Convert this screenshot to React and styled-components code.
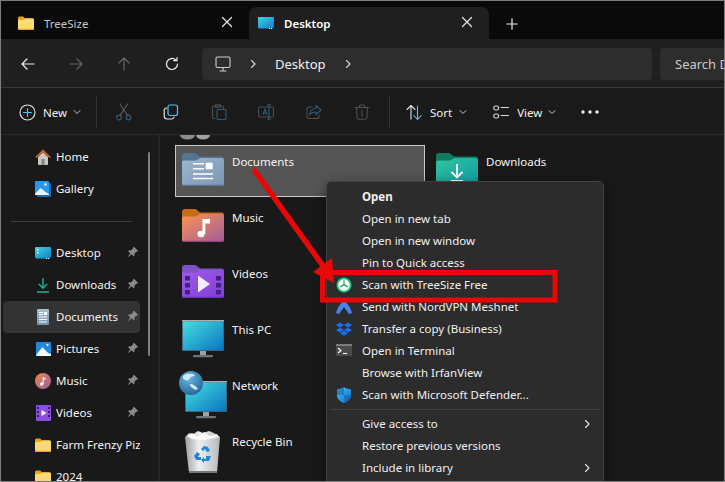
import React from "react";
import styled, { createGlobalStyle } from "styled-components";

const Global = createGlobalStyle`
  html, body { margin: 0; padding: 0; background: #191919; }
  * { box-sizing: border-box; }
`;

const Win = styled.div`
  position: relative; width: 725px; height: 482px; overflow: hidden;
  border: 1px solid #7d7d7d; display: flex; flex-direction: column;
  background: #191919; color: #fff;
  font-family: "Noto Sans", "Open Sans", sans-serif; font-size: 11.5px;
`;
const TabBar = styled.div`
  height: 38px; flex: none; background: #0a0a0a; display: flex; align-items: flex-end;
`;
const Tab = styled.div`
  height: 32px; width: ${p => p.$w}px; display: flex; align-items: center; position: relative;
  padding: 0 0 0 ${p => p.$pad}px; gap: ${p => p.$gap}px;
  background: ${p => (p.$active ? "#1f1f1f" : "transparent")};
  border-radius: 7px 7px 0 0; color: ${p => (p.$active ? "#fff" : "#c4c4c4")};
  font-weight: ${p => (p.$active ? 600 : 400)}; flex: none;
`;
const TabClose = styled.span`
  margin-left: auto; margin-right: 16px; margin-bottom: 3px; display: flex;
`;
const PlusBtn = styled.span`
  margin-left: 17px; display: flex; padding-bottom: 9px;
`;
const NavBar = styled.div`
  height: 49px; flex: none; background: #1f1f1f; border-bottom: 1px solid #3a3a3a;
  display: flex; align-items: center; padding: 1px 0 0 3px;
`;
const NavBtn = styled.span`
  width: 48px; display: flex; justify-content: center; flex: none;
`;
const AddressBar = styled.div`
  width: 450px; height: 32px; flex: none; margin-left: 6px; background: #2d2d2d; border-radius: 4px;
  display: flex; align-items: center; padding-left: 13px; font-size: 13px; color: #f2f2f2;
`;
const Crumb = styled.span`
  margin: 0 ${p => p.$r}px 0 ${p => p.$l}px; display: flex;
`;
const SearchBox = styled.div`
  width: 80px; height: 32px; flex: none; margin-left: 8px; background: #2d2d2d; border-radius: 4px 0 0 4px;
  display: flex; align-items: center; padding-left: 15px; font-size: 13px; color: #c9c9c9;
  white-space: nowrap; overflow: hidden;
`;
const Toolbar = styled.div`
  height: 47px; flex: none; background: #1a1a1a; border-bottom: 1px solid #2b2b2b;
  display: flex; align-items: center; padding: 2px 0 0 18px;
`;
const ToolText = styled.span`
  margin-left: ${p => p.$l}px; color: #f2f2f2; display: inline-block;
`;
const ToolChevron = styled.span`
  margin-left: ${p => p.$l}px; display: flex;
`;
const ToolSep = styled.span`
  width: 1px; height: 32px; background: #333; flex: none; margin-left: ${p => p.$l}px;
`;
const ToolIcon = styled.span`
  margin-left: ${p => p.$l}px; display: flex; flex: none;
`;
const Body = styled.div`
  flex: 1; min-height: 0; display: flex; overflow: hidden;
`;
const Sidebar = styled.div`
  width: 157px; flex: none; padding: 6px 0 0 2px; position: relative; overflow: hidden;
`;
const SideThumb = styled.span`
  position: absolute; left: 147px; top: 17px; width: 2px; height: 204px; background: #7f7f7f; border-radius: 1px;
`;
const SideRow = styled.div`
  width: 137px; height: 32px; display: flex; align-items: center; padding-left: 32px; position: relative;
  border-radius: 4px; background: ${p => (p.$sel ? "#333333" : "transparent")}; white-space: nowrap; overflow: hidden;
  color: #f4f4f4;
`;
const SideGlyph = styled.span`
  width: 16px; display: flex; justify-content: center; flex: none;
`;
const SideLabel = styled.span`
  margin-left: 5px; padding-bottom: 2px;
`;
const SidePin = styled.span`
  position: absolute; left: 124px; top: 9px; display: flex;
`;
const SideDivider = styled.div`
  height: 32px; width: 137px; display: flex; align-items: center; padding-left: 8px;
  &::after { content: ""; display: block; width: 121px; height: 1px; background: #3d3d3d; }
`;
const Split = styled.div`
  width: 2px; flex: none; background: #262626; margin-right: 15px;
`;
const Content = styled.div`
  flex: 1; min-width: 0; display: flex; flex-direction: column; overflow: hidden;
`;
const PeekStrip = styled.div`
  height: 10px; flex: none; padding-left: 5px; overflow: hidden; display: flex; align-items: flex-start;
`;
const Columns = styled.div`
  display: flex; gap: 4px;
`;
const Column = styled.div`
  width: 250px; flex: none; display: flex; flex-direction: column; gap: 4px;
`;
const Tile = styled.div`
  height: 52px; display: flex; align-items: flex-start; position: relative;
  border: 1px solid ${p => (p.$sel ? "#c8c8c8" : "transparent")};
  background: ${p => (p.$sel ? "#555555" : "transparent")};
  color: #f4f4f4;
`;
const TileIcon = styled.span`
  width: 56px; height: 50px; flex: none; display: block;
`;
const TileLabel = styled.span`
  line-height: 16px; padding-top: 8px;
`;
const Menu = styled.div`
  position: absolute; left: 325px; top: 180px; width: 278px; height: 320px;
  background: #2c2c2c; border: 1px solid #414141; border-radius: 5px; padding: 4px 0;
  box-shadow: 0 4px 14px rgba(0,0,0,.45);
`;
const MenuItem = styled.div`
  height: 22px; display: flex; align-items: center; position: relative; padding: 0 0 2px 35px;
  color: #f0f0f0; font-weight: ${p => (p.$bold ? 700 : 400)};
  white-space: nowrap;
`;
const MenuGlyph = styled.span`
  position: absolute; left: 9px; top: 3px; width: 16px; height: 16px; display: block;
`;
const MenuArrow = styled.span`
  position: absolute; left: 255px; top: 6px; display: flex;
`;
const MenuSep = styled.div`
  height: 7px; display: flex; align-items: center; padding: 0 4px 1px;
  &::after { content: ""; flex: 1; height: 1px; background: #434343; }
`;
const Annotation = styled.svg`
  position: absolute; left: -1px; top: -1px; width: 725px; height: 482px; pointer-events: none;
`;

const Line = ({ c = "#fff", w = 1.2, size = 16, children, vb = "0 0 16 16" }) => (
  <svg width={size} height={size} viewBox={vb} fill="none" stroke={c} strokeWidth={w} strokeLinecap="round" strokeLinejoin="round">{children}</svg>
);
const X = () => <Line size={12} vb="0 0 12 12" c="#e8e8e8"><path d="M1.5 1.5l9 9M10.5 1.5l-9 9" /></Line>;
const Chevron = ({ c = "#dcdcdc" }) => <Line size={10} vb="0 0 10 10" c={c} w={1.1}><path d="M3.5 1.5L7 5 3.5 8.5" /></Line>;
const Down = () => <Line size={8} vb="0 0 8 8" c="#c6c6c6" w={1}><path d="M1 2.5L4 5.5 7 2.5" /></Line>;
const Pin = () => (
  <svg width="12" height="12" viewBox="0 0 12 12"><path d="M7 .8l4.2 4.2-1 .7-.7-.2-2 2 .1 1.9-.9.8-2-2L1.2 11 1 10.8l2.2-3.6-2-2 .8-.9 1.9.1 2-2-.2-.7z" fill="#8b8b8b" /></svg>
);
const SmallFolder = () => (
  <svg width="16" height="14" viewBox="0 0 16 14"><path d="M0 2a1.5 1.5 0 011.5-1.5h3.6L7 2.2h7.5A1.5 1.5 0 0116 3.7V4H0z" fill="#e8a317" /><path d="M0 4l6-.3L7.5 2.5h7A1.5 1.5 0 0116 4v8.5A1.5 1.5 0 0114.5 14h-13A1.5 1.5 0 010 12.5z" fill="#fcd977" /><path d="M0 12.5A1.5 1.5 0 001.5 14h13a1.5 1.5 0 001.5-1.5V12.700H0z" fill="#e8a81f" /></svg>
);
const DesktopSmall = ({ grad, dots }) => (
  <svg width="16" height="14" viewBox="0 0 16 14">
    <defs><linearGradient id={grad} x1="0" y1="0" x2="1" y2="1"><stop offset="0" stopColor="#3fd3e2" /><stop offset="1" stopColor="#0f7fc9" /></linearGradient></defs>
    <rect x="0" y="1" width="16" height="11" rx="1" fill={`url(#${grad})`} />
    <rect x="1" y="12" width="14" height="1" fill="#1b5c86" />
    <rect x="11" y="12" width="1" height="1" fill="#dff" /><rect x="13" y="12" width="1" height="1" fill="#dff" />
    {dots && <path d="M2 3h1.500v1.500H2zM2 6h1.500v1.500H2z" fill="#fff" />}
  </svg>
);
const HomeIcon = () => (
  <svg width="16" height="16" viewBox="0 0 16 16"><path d="M3 8l5-5 5 5v7a1 1 0 01-1 1H4a1 1 0 01-1-1z" fill="#c9c6c2" /><rect x="6.3" y="10" width="3.4" height="6" fill="#8a8784" /><path d="M.3 8L8 .6 15.7 8l-1 1L8 2.8 1.3 9z" fill="#d96b17" /></svg>
);
const GalleryIcon = () => (
  <svg width="16" height="16" viewBox="0 0 16 16"><rect x="2" y="2" width="14" height="14" rx="1" fill="#1a69b8" /><rect x="0" y="0" width="14" height="14" rx="1" fill="#2b97ea" /><path d="M0 13l5.5-6 5 4 3.5 2v1H0z" fill="#eaf5fd" /><circle cx="10.5" cy="3.5" r="1.3" fill="#fff" /></svg>
);
const DownArrow = ({ c = "#1fb18f" }) => (
  <svg width="16" height="16" viewBox="0 0 16 16" fill="none" stroke={c} strokeWidth="1.4"><path d="M8 1v10M3.8 7L8 11.2 12.2 7" /><path d="M2 15h12" strokeWidth="1.5" /></svg>
);
const DocSmall = () => (
  <svg width="14" height="16" viewBox="0 0 14 16"><defs><linearGradient id="ds" x1="0" y1="0" x2="0" y2="1"><stop offset="0" stopColor="#a9c0d6" /><stop offset="1" stopColor="#7390ad" /></linearGradient></defs><rect x="1" y="0" width="12" height="16" rx="1" fill="url(#ds)" /><path d="M3 3h4v1H3zM3 5h4v1H3zM3 7.5h8v1H3zM3 10h8v1H3zM3 12.500h8v1H3zM8 3h3v3H8z" fill="#fff" /></svg>
);
const PicturesSmall = () => (
  <svg width="15" height="14" viewBox="0 0 15 14"><rect width="15" height="14" rx="1" fill="#1e88dc" /><path d="M0 13L6.5 5 11 10l2 1.5 2 .5v1a1 1 0 01-1 1H1z" fill="#f2f9fe" /><circle cx="11.5" cy="2.8" r="1.1" fill="#fff" /></svg>
);
const MusicSmall = () => (
  <svg width="16" height="16" viewBox="0 0 16 16"><defs><linearGradient id="ms" x1="0" y1="0" x2="1" y2="1"><stop offset="0" stopColor="#f2884f" /><stop offset="1" stopColor="#9a5c9e" /></linearGradient></defs><circle cx="8" cy="8" r="8" fill="url(#ms)" /><circle cx="6.7" cy="11" r="1.8" fill="#fff" /><path d="M7.6 11V4.3l3 1v1.5l-2-.6V11z" fill="#fff" /></svg>
);
const VideoSmall = () => (
  <svg width="15" height="16" viewBox="0 0 15 16"><rect width="15" height="16" rx="1" fill="#8a4ee0" /><path d="M1 2h2v2H1zM1 6h2v2H1zM1 10h2v2H1zM12 2h2v2h-2zM12 6h2v2h-2zM12 10h2v2h-2z" fill="#3a1d73" /><path d="M5.5 5L10.5 8l-5 3z" fill="#fff" /></svg>
);

const BigFolder = ({ id, back, from, to, edge, children }) => (
  <g transform="translate(6,7)">
    <defs><linearGradient id={id} x1="0" y1="0" x2="1" y2="1"><stop offset="0" stopColor={from} /><stop offset="1" stopColor={to} /></linearGradient></defs>
    <path d="M0 3a3 3 0 013-3h10.5L18 3.5h21.5a2.5 2.5 0 012.5 2.5V10H0z" fill={back} />
    <path d="M0 9a1.5 1.5 0 011.5-1.5H14L18.5 5H39.5A2.5 2.5 0 0142 7.5V30.5A2.5 2.5 0 0139.5 33H2.5A2.5 2.5 0 010 30.5z" fill={`url(#${id})`} />
    <path d="M0 31.5A1.5 1.5 0 001.5 33h39a1.5 1.5 0 001.5-1.5V31.800H0z" fill={edge} />
    {children}
  </g>
);
const TileSvg = ({ children }) => (
  <TileIcon><svg width="56" height="50" viewBox="0 0 56 50" style={{ overflow: "visible" }}>{children}</svg></TileIcon>
);
const DocumentsBig = () => (
  <TileSvg>
    <BigFolder id="f1" back="#54758f" from="#9db6cf" to="#7b96b3" edge="#5b7892">
      <path d="M11 10h11v1.500H11zM11 15h11v1.500H11zM11 20.300h20v1.500H11zM11 24.700h20v1.500H11zM23.700 9.700h7v6.600h-7z" fill="#fff" />
    </BigFolder>
  </TileSvg>
);
const MusicBig = () => (
  <TileSvg>
    <BigFolder id="f2" back="#c96a16" from="#fb9450" to="#a35b9b" edge="#8a4a80">
      <ellipse cx="19" cy="25" rx="3.5" ry="3.2" fill="#fff" />
      <path d="M20.5 25V10h7.5v4.5h-4.700V25z" fill="#fff" />
    </BigFolder>
  </TileSvg>
);
const VideosBig = () => (
  <TileSvg>
    <BigFolder id="f3" back="#7c52c6" from="#a05ce8" to="#7f3ed6" edge="#6c33b5">
      <path d="M3 11h5v4.5H3zM3 18h5v4.5H3zM3 25h5v4.5H3zM34 11h5v4.5h-5zM34 18h5v4.5h-5zM34 25h5v4.5h-5z" fill="#3f2281" />
      <path d="M16 10.5L28 19 16 27.500z" fill="#f3edfc" />
    </BigFolder>
  </TileSvg>
);
const DownloadsBig = () => (
  <TileSvg>
    <BigFolder id="f4" back="#0e7a5e" from="#30c49c" to="#0f9ca6" edge="#0d7a80">
      <path d="M21 11v13M15.5 19L21 24.500 26.500 19M15 28h12" fill="none" stroke="#fff" strokeWidth="1.8" />
    </BigFolder>
  </TileSvg>
);
const Monitor = ({ id, x, y }) => (
  <g transform={`translate(${x},${y})`}>
    <defs><linearGradient id={id} x1="0" y1="0" x2="1" y2="1"><stop offset="0" stopColor="#45e0e0" /><stop offset="1" stopColor="#0a74c0" /></linearGradient></defs>
    <rect x="0" y="0" width="42" height="31" fill="#4d5a63" rx="1" />
    <rect x="0.8" y="1.4" width="40.4" height="28.8" fill={`url(#${id})`} />
    <rect x="0" y="0" width="42" height="1.3" fill="#a7b0b5" />
    <rect x="18" y="31" width="6" height="5" fill="#9aa3a8" />
    <rect x="11" y="35" width="20" height="2.2" rx="1" fill="#6c757b" />
  </g>
);
const ThisPC = () => <TileSvg><Monitor id="m1" x={6} y={6} /></TileSvg>;
const NetworkBig = () => (
  <TileSvg>
    <Monitor id="m2" x={9} y={11} />
    <defs><radialGradient id="gl" cx=".4" cy=".3" r=".8"><stop offset="0" stopColor="#6db8e0" /><stop offset="1" stopColor="#1c5e94" /></radialGradient></defs>
    <circle cx="15" cy="13" r="12" fill="url(#gl)" />
    <path d="M8 5c3-1 7-2 11 0-1 2-4 1-5 3s-3 3-5 2-3-3-1-5zM14 14c3 0 6 2 8 5-2 1-3 1-4 0s-4-2-4-5z" fill="#d4e9f4" />
  </TileSvg>
);
const RecycleBig = () => (
  <TileSvg>
    <g transform="translate(9,4)">
      <defs><linearGradient id="bin" x1="0" y1="0" x2="1" y2="0"><stop offset="0" stopColor="#9ca0a3" /><stop offset=".4" stopColor="#eef0f1" /><stop offset="1" stopColor="#b5b8ba" /></linearGradient></defs>
      <path d="M0 7l4-4 4 1 5-3 5 2 6-2 5 2 6 4-3 36H4z" fill="url(#bin)" />
      <path d="M2 6l5-3 6 4 6-5 6 4 7-2 2 3-15 3-12-1z" fill="#fafafa" />
      <path d="M16 19l3-3 4 1 2 4-3 1-2-3-2 2zM9 26l3-4 3 2-2 3h3v3h-5zM21 26h5l-2 5h-5v2l-3-3 3-3v2h2z" fill="#1e86de" />
      <rect x="4" y="41" width="28" height="2" fill="#777" />
    </g>
  </TileSvg>
);

const sideRows = [
  ["Home", <HomeIcon />], ["Gallery", <GalleryIcon />], null,
  ["Desktop", <DesktopSmall grad="d2" dots />, true],
  ["Downloads", <DownArrow />, true],
  ["Documents", <DocSmall />, true, true],
  ["Pictures", <PicturesSmall />, true],
  ["Music", <MusicSmall />, true],
  ["Videos", <VideoSmall />, true],
  ["Farm Frenzy Pizza Party", <SmallFolder />],
  ["2024", <SmallFolder />],
];

const TreeSizeGlyph = () => (
  <svg width="16" height="16" viewBox="0 0 16 16"><circle cx="8" cy="8" r="7.5" fill="#27c77a" /><circle cx="8" cy="8" r="5.7" fill="#fff" /><path d="M7.400 3.3h1.200v4l3.600 2.2-.6 1L8 8.5l-3.600 2-.6-1 3.600-2.200z" fill="#1d9e5f" /></svg>
);
const NordGlyph = () => (
  <svg width="16" height="16" viewBox="0 0 16 16"><path d="M0 14C1 9 4 5 8 1c4 4 7 8 8 13l-3 1-5-7-5 7z" fill="#4880ee" /></svg>
);
const DropboxGlyph = () => (
  <svg width="16" height="16" viewBox="0 0 16 16"><path d="M4 1.5L8 4 4 6.5 0 4zM12 1.5L16 4l-4 2.5L8 4zM4 6.5L8 9l-4 2.5L0 9zM12 6.500L16 9l-4 2.500L8 9zM4 12.300l4-2.500 4 2.500-4 2.500z" fill="#1a6ff0" /></svg>
);
const TerminalGlyph = () => (
  <svg width="16" height="16" viewBox="0 0 16 16"><rect y="1" width="16" height="12" fill="#4a4a4a" /><rect y="1" width="16" height="2" fill="#7c7c7c" /><path d="M2 5l3 2.5L2 10" fill="none" stroke="#fff" strokeWidth="1.1" /><path d="M7 10.5h4" stroke="#fff" strokeWidth="1.1" /></svg>
);
const ShieldGlyph = () => (
  <svg width="16" height="16" viewBox="0 0 16 16"><defs><linearGradient id="sh" x1="0" y1="0" x2="1" y2="1"><stop offset="0" stopColor="#4cc3f0" /><stop offset="1" stopColor="#0b6bc4" /></linearGradient></defs><path d="M8 0c2 1.5 4 2 7 2.2V8c0 4-3 6.5-7 8-4-1.500-7-4-7-8V2.200C4 2 6 1.500 8 0z" fill="url(#sh)" /><path d="M8 8h7c0 4-3 6.5-7 8zM1 8h7V0C6 1.500 4 2 1 2.200z" fill="#0d5fae" opacity=".55" /></svg>
);

const menuTop = [
  ["Open", null, true], ["Open in new tab"], ["Open in new window"], ["Pin to Quick access"],
  ["Scan with TreeSize Free", <TreeSizeGlyph />], ["Send with NordVPN Meshnet", <NordGlyph />],
  ["Transfer a copy (Business)", <DropboxGlyph />], ["Open in Terminal", <TerminalGlyph />],
  ["Browse with IrfanView"], ["Scan with Microsoft Defender...", <ShieldGlyph />],
];
const menuBottom = [["Give access to", true], ["Restore previous versions", false], ["Include in library", true]];
const dim = "#2f5a78";

export default function App() {
  return (
    <Win>
      <Global />
      <TabBar>
        <Tab $w={248} $pad={17} $gap={10}><SmallFolder /><span>TreeSize</span><TabClose><X /></TabClose></Tab>
        <Tab $w={240} $pad={9} $gap={10} $active><DesktopSmall grad="d1" /><span>Desktop</span><TabClose><X /></TabClose></Tab>
        <PlusBtn><Line size={12} vb="0 0 12 12" c="#eee"><path d="M6 .8v10.400M.8 6h10.400" /></Line></PlusBtn>
      </TabBar>
      <NavBar>
        <NavBtn><Line c="#efefef"><path d="M14 8H2M7 3L2 8l5 5" /></Line></NavBtn>
        <NavBtn><Line c="#666"><path d="M2 8h12M9 3l5 5-5 5" /></Line></NavBtn>
        <NavBtn><Line c="#666"><path d="M8 14V2M3 7l5-5 5 5" /></Line></NavBtn>
        <NavBtn><Line c="#efefef"><path d="M13.5 8a5.500 5.500 0 11-1.800-4.100M13 1.500v3.200H9.800" /></Line></NavBtn>
        <AddressBar>
          <Line size={16} c="#cfcfcf" w={1.1}><rect x="1" y="1" width="14" height="10.500" rx="1.500" /><path d="M8 11.500V15M5 15h6" /></Line>
          <Crumb $l={17} $r={17}><Chevron /></Crumb>
          <span>Desktop</span>
          <Crumb $l={17} $r={0}><Chevron /></Crumb>
        </AddressBar>
        <SearchBox>Search Desktop</SearchBox>
      </NavBar>
      <Toolbar>
        <Line size={17} vb="0 0 17 17" c="#e6e6e6" w={1.1}><circle cx="8.500" cy="8.500" r="7.500" /><path d="M8.500 4.500v8M4.500 8.500h8" stroke="#4cc2ff" /></Line>
        <ToolText $l={7}>New</ToolText>
        <ToolChevron $l={6}><Down /></ToolChevron>
        <ToolSep $l={15} />
        <ToolIcon $l={18}><Line size={18} vb="0 0 18 18" c={dim} w={1.2}><circle cx="4" cy="14.500" r="2.300" /><circle cx="13.500" cy="14.500" r="2.300" /><path d="M5 12.500L12.500 1M12.500 12.500L5 1" stroke="#5c5c5c" /></Line></ToolIcon>
        <ToolIcon $l={30}><Line size={16} c="#e0e0e0" w={1.2}><rect x="5" y="1" width="9.500" height="10.500" rx="2" stroke="#4cc2ff" /><path d="M3.800 4A2.500 2.500 0 001.200 6.500v5.500A3 3 0 004.200 15h4.500a2.500 2.500 0 002.400-2" /></Line></ToolIcon>
        <ToolIcon $l={32}><Line size={16} c="#4f4f4f" w={1.1}><path d="M4 14.500H2.500a1 1 0 01-1-1V3a1 1 0 011-1h9a1 1 0 011 1v2" /><path d="M4.500 .8h5v2.500h-5z" /><rect x="6" y="5.500" width="9" height="10" rx="1" stroke={dim} /></Line></ToolIcon>
        <ToolIcon $l={31}><Line size={16} c="#4f4f4f" w={1.1}><rect x="0.600" y="3" width="14.800" height="10" rx="1.500" /><path d="M5 10.500l2-5.500 2 5.500M5.700 9h2.600" stroke={dim} /><path d="M11 .8v14.400M9.500 .8h3M9.500 15.200h3" stroke={dim} /></Line></ToolIcon>
        <ToolIcon $l={32}><Line size={16} c="#4f4f4f" w={1.1}><path d="M6 3H3a2 2 0 00-2 2v7.500a2 2 0 002 2h8a2 2 0 002-2V11" /><path d="M10 1.500l5 4.500-5 4.500V8c-3 0-5 .5-6.500 3C3.500 7.500 6 4.500 10 4.300z" stroke={dim} /></Line></ToolIcon>
        <ToolIcon $l={32}><Line size={16} c="#4f4f4f" w={1.1}><path d="M1 3.500h14M5.500 3.500V2a1 1 0 011-1h3a1 1 0 011 1v1.500M2.500 3.500l.7 10.500a1.500 1.500 0 001.500 1.300h6.600a1.500 1.500 0 001.500-1.300l.7-10.500M8 6.500v6" /></Line></ToolIcon>
        <ToolSep $l={19} />
        <ToolIcon $l={16}><Line size={17} vb="0 0 17 17" c="#e0e0e0" w={1.1}><path d="M5 15V1.500M1 5.500l4-4 4 4" /><path d="M11.500 2v13.500M7.800 11.500l3.700 4 3.700-4" stroke="#4cc2ff" /></Line></ToolIcon>
        <ToolText $l={7}>Sort</ToolText>
        <ToolChevron $l={7}><Down /></ToolChevron>
        <ToolIcon $l={26}><Line size={16} c="#dcdcdc" w={1.1}><rect x="0.800" y="2" width="4.800" height="4" rx="1.800" /><rect x="0.800" y="10" width="4.800" height="4" rx="1.800" /><path d="M8 3.500h7.500M8 11.500h7.500" /></Line></ToolIcon>
        <ToolText $l={8}>View</ToolText>
        <ToolChevron $l={6}><Down /></ToolChevron>
        <ToolIcon $l={25}><svg width="18" height="4" viewBox="0 0 18 4"><circle cx="2" cy="2" r="1.700" fill="#eee" /><circle cx="9" cy="2" r="1.700" fill="#eee" /><circle cx="16" cy="2" r="1.700" fill="#eee" /></svg></ToolIcon>
      </Toolbar>
      <Body>
        <Sidebar>
          <SideThumb />
          {sideRows.map((r, i) =>
            r ? (
              <SideRow key={i} $sel={r[3]}>
                <SideGlyph>{r[1]}</SideGlyph>
                <SideLabel>{r[0]}</SideLabel>
                {r[2] && <SidePin><Pin /></SidePin>}
              </SideRow>
            ) : <SideDivider key={i} />
          )}
        </Sidebar>
        <Split />
        <Content>
          <PeekStrip>
            <svg width="32" height="5" viewBox="0 0 32 5"><ellipse cx="7.500" cy="0" rx="7.500" ry="4.500" fill="#8c8c8c" /><ellipse cx="23" cy="0" rx="7" ry="4.500" fill="#a3a3a3" /></svg>
          </PeekStrip>
          <Columns>
            <Column>
              <Tile $sel><DocumentsBig /><TileLabel>Documents</TileLabel></Tile>
              <Tile><MusicBig /><TileLabel>Music</TileLabel></Tile>
              <Tile><VideosBig /><TileLabel>Videos</TileLabel></Tile>
              <Tile><ThisPC /><TileLabel>This PC</TileLabel></Tile>
              <Tile><NetworkBig /><TileLabel>Network</TileLabel></Tile>
              <Tile><RecycleBig /><TileLabel>Recycle Bin</TileLabel></Tile>
            </Column>
            <Column>
              <Tile><DownloadsBig /><TileLabel>Downloads</TileLabel></Tile>
            </Column>
          </Columns>
        </Content>
      </Body>
      <Menu>
        {menuTop.map(([t, g, b]) => (
          <MenuItem key={t} $bold={b}>{g && <MenuGlyph>{g}</MenuGlyph>}{t}</MenuItem>
        ))}
        <MenuSep />
        {menuBottom.map(([t, sub]) => (
          <MenuItem key={t}>{t}{sub && <MenuArrow><Chevron c="#e6e6e6" /></MenuArrow>}</MenuItem>
        ))}
      </Menu>
      <Annotation viewBox="0 0 725 482">
        <path d="M255 171L326 270" stroke="#e80808" strokeWidth="5.500" strokeLinecap="round" fill="none" />
        <path d="M313 272L332 258L334 283z" fill="#e80808" />
        <rect x="322.500" y="272.500" width="232.500" height="27.500" fill="none" stroke="#e80808" strokeWidth="5" />
      </Annotation>
    </Win>
  );
}
